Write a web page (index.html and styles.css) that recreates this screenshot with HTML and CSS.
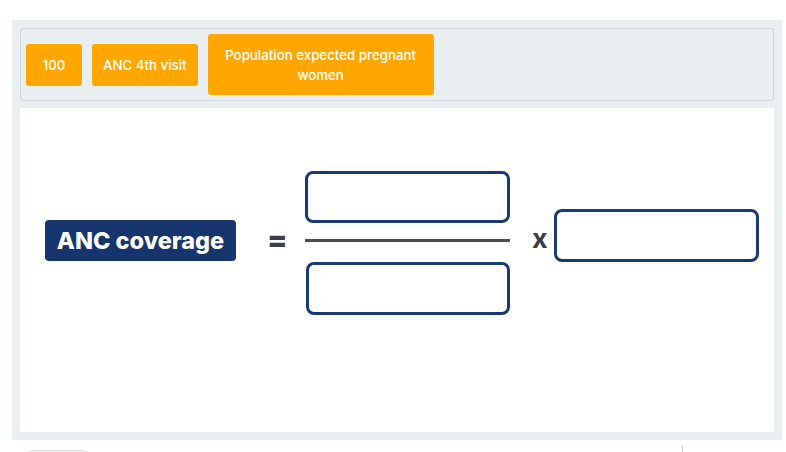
FILE: index.html
```html
<!DOCTYPE html>
<html lang="en">
<head>
<meta charset="utf-8">
<title>ANC coverage</title>
<link rel="stylesheet" href="styles.css">
</head>
<body>
<div class="page">
  <div class="panel">
    <div class="toolbar">
      <div class="chip">100</div>
      <div class="chip">ANC 4th visit</div>
      <div class="chip chip-wide">Population expected pregnant women</div>
    </div>
    <div class="canvas">
      <div class="formula">
        <div class="badge">ANC coverage</div>
        <div class="equals">=</div>
        <div class="fraction">
          <div class="slot"></div>
          <div class="bar"></div>
          <div class="slot slot-bottom"></div>
        </div>
        <div class="times">x</div>
        <div class="slot slot-factor"></div>
      </div>
    </div>
  </div>
  <div class="footer">
    <div class="footer-btn"></div>
    <div class="footer-sep"></div>
  </div>
</div>
</body>
</html>
```

FILE: styles.css
```css
html, body {
  margin: 0;
  padding: 0;
  background: #ffffff;
  font-family: Inter, "Noto Sans", "Liberation Sans", sans-serif;
}

.page {
  width: 786px;
  height: 452px;
  overflow: hidden;
  padding-top: 20px;
  box-sizing: border-box;
}

.panel {
  margin-left: 12px;
  width: 770px;
  height: 420px;
  box-sizing: border-box;
  background: #e9eef1;
  padding: 8px;
  display: flex;
  flex-direction: column;
}

.toolbar {
  height: 73px;
  box-sizing: border-box;
  border: 1px solid #d2d7db;
  border-radius: 3px;
  padding: 0 5px;
  display: flex;
  align-items: center;
  gap: 10px;
}

.chip {
  min-width: 56px;
  box-sizing: border-box;
  background: #ffa600;
  color: #ffffff;
  font-size: 13.3px;
  font-weight: 500;
  line-height: 20px;
  padding: 11px 11px;
  border-radius: 3px;
  text-align: center;
}

.chip-wide {
  width: 226px;
  padding: 11px 14px 10px;
}

.canvas {
  margin-top: 7px;
  flex: 1;
  background: #ffffff;
}

.formula {
  display: flex;
  align-items: flex-start;
  padding: 63px 0 0 25px;
}

.badge {
  margin-top: 49px;
  width: 191px;
  height: 41px;
  box-sizing: border-box;
  background: #16356c;
  color: #ffffff;
  border-radius: 4px;
  font-size: 23.5px;
  font-weight: 800;
  line-height: 41px;
  text-align: center;
}

.equals {
  margin: 55px 0 0 31px;
  width: 18px;
  font-size: 30px;
  font-weight: 800;
  line-height: 26px;
  color: #3b3e4a;
}

.fraction {
  margin-left: 20px;
  width: 205px;
  display: flex;
  flex-direction: column;
}

.slot {
  height: 52px;
  box-sizing: border-box;
  border: 3px solid #1b3a73;
  border-radius: 8px;
  background: #ffffff;
}

.bar {
  margin: 16px 0 20px;
  height: 3px;
  background: #4a4b55;
  border-radius: 1px;
}

.slot-bottom {
  height: 53px;
  margin-left: 1px;
}

.times {
  margin: 53px 0 0 22px;
  font-size: 27px;
  font-weight: 700;
  line-height: 30px;
  color: #3b3d47;
}

.slot-factor {
  margin: 38px 0 0 6px;
  width: 205px;
  height: 53px;
}

.footer {
  display: flex;
  align-items: flex-start;
  height: 12px;
}

.footer-btn {
  margin: 10px 0 0 25px;
  width: 65px;
  height: 30px;
  box-sizing: border-box;
  border: 1px solid #dcdcdc;
  border-radius: 8px;
  background: #f3f3f3;
}

.footer-sep {
  margin: 5px 103px 0 auto;
  width: 1px;
  height: 10px;
  background: #cfcfcf;
}
```
